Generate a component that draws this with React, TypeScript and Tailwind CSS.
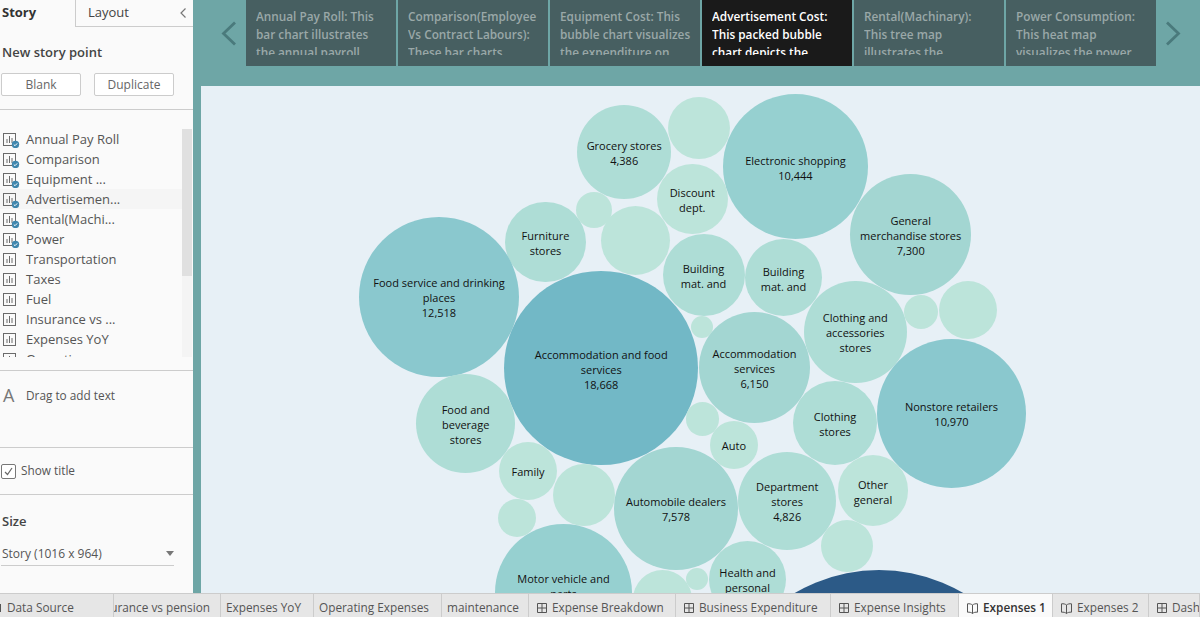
const FONT = "font-['Open_Sans','Noto_Sans',sans-serif]"

const points = [
  { title: "Annual Pay Roll", done: true },
  { title: "Comparison", done: true },
  { title: "Equipment ...", done: true },
  { title: "Advertisemen...", done: true, selected: true },
  { title: "Rental(Machi...", done: true },
  { title: "Power", done: true },
  { title: "Transportation" },
  { title: "Taxes" },
  { title: "Fuel" },
  { title: "Insurance vs ..." },
  { title: "Expenses YoY" },
  { title: "Operating ..." },
]

const cards = [
  { lines: ["Annual Pay Roll: This", "bar chart illustrates", "the annual payroll"] },
  { lines: ["Comparison(Employee", "Vs Contract Labours):", "These bar charts"] },
  { lines: ["Equipment Cost: This", "bubble chart visualizes", "the expenditure on"] },
  { lines: ["Advertisement Cost:", "This packed bubble", "chart depicts the"], active: true },
  { lines: ["Rental(Machinary):", "This tree map", "illustrates the"] },
  { lines: ["Power Consumption:", "This heat map", "visualizes the power"] },
]

const LIGHT = "#bce4da"
const PALE = "#aeddd6"
const MID = "#a3d6d2"
const TEAL = "#96d0d0"
const DEEP = "#8ac8ce"

// page coordinates, measured off the reference
const bubbles: { x: number; y: number; r: number; c: string; t?: string[] }[] = [
  { x: 624.2, y: 152, r: 47, c: PALE, t: ["Grocery stores", "4,386"] },
  { x: 699, y: 127.5, r: 31, c: LIGHT },
  { x: 795.5, y: 166.7, r: 72.8, c: TEAL, t: ["Electronic shopping", "10,444"] },
  { x: 692.3, y: 199, r: 35.3, c: LIGHT, t: ["Discount", "dept."] },
  { x: 910.7, y: 234.5, r: 60.8, c: MID, t: ["General", "merchandise stores", "7,300"] },
  { x: 545.5, y: 242, r: 40.2, c: PALE, t: ["Furniture", "stores"] },
  { x: 594, y: 210, r: 17.7, c: LIGHT },
  { x: 635.8, y: 240.5, r: 34.5, c: LIGHT },
  { x: 703.5, y: 274.5, r: 41, c: PALE, t: ["Building", "mat. and"] },
  { x: 783.5, y: 277.7, r: 38.6, c: PALE, t: ["Building", "mat. and"] },
  { x: 439, y: 297, r: 79.6, c: DEEP, t: ["Food service and drinking", "places", "12,518"] },
  { x: 702, y: 327, r: 11.3, c: LIGHT },
  { x: 601.2, y: 368, r: 97, c: "#72b8c6", t: ["Accommodation and food", "services", "18,668"] },
  { x: 754.5, y: 367.8, r: 55.5, c: MID, t: ["Accommodation", "services", "6,150"] },
  { x: 855.3, y: 332, r: 51.3, c: PALE, t: ["Clothing and", "accessories", "stores"] },
  { x: 921, y: 312, r: 17, c: LIGHT },
  { x: 968, y: 310, r: 29.3, c: LIGHT },
  { x: 951.5, y: 413.2, r: 74.5, c: DEEP, t: ["Nonstore retailers", "10,970"] },
  { x: 465.7, y: 423.7, r: 49.3, c: PALE, t: ["Food and", "beverage", "stores"] },
  { x: 702.8, y: 419, r: 16.6, c: LIGHT },
  { x: 734, y: 445, r: 24.2, c: LIGHT, t: ["Auto"] },
  { x: 835, y: 423, r: 41.9, c: PALE, t: ["Clothing", "stores"] },
  { x: 873, y: 490.7, r: 35.3, c: LIGHT, t: ["Other", "general"] },
  { x: 528, y: 471, r: 29.3, c: LIGHT, t: ["Family"] },
  { x: 584, y: 495, r: 31, c: LIGHT },
  { x: 676, y: 508.3, r: 61.7, c: MID, t: ["Automobile dealers", "7,578"] },
  { x: 787.2, y: 500.7, r: 49.2, c: PALE, t: ["Department", "stores", "4,826"] },
  { x: 517, y: 518, r: 18.7, c: LIGHT },
  { x: 563.5, y: 592.5, r: 68.5, c: TEAL, t: ["Motor vehicle and", "parts", "\u00a0"] },
  { x: 847, y: 546, r: 26, c: LIGHT },
  { x: 747.5, y: 579.2, r: 38.5, c: PALE, t: ["Health and", "personal"] },
  { x: 662, y: 599, r: 29.5, c: LIGHT },
  { x: 697, y: 579, r: 11.3, c: LIGHT },
  { x: 879, y: 736, r: 166, c: "#2c5a87" },
]

const tabs = [
  { label: "Data Source", w: 114, kind: "source" },
  { label: "Insurance vs pension", w: 107, kind: "sheet", cut: true },
  { label: "Expenses YoY", w: 93, kind: "sheet" },
  { label: "Operating Expenses", w: 128, kind: "sheet" },
  { label: "maintenance", w: 87, kind: "sheet" },
  { label: "Expense Breakdown", w: 147, kind: "dash" },
  { label: "Business Expenditure", w: 155, kind: "dash" },
  { label: "Expense Insights", w: 128, kind: "dash" },
  { label: "Expenses 1", w: 94, kind: "story", active: true },
  { label: "Expenses 2", w: 96, kind: "story" },
  { label: "Dashboard 1", w: 51, kind: "dash" },
]

function SheetIcon({ done }: { done?: boolean }) {
  return (
    <svg width="19" height="18" viewBox="0 0 19 18" className="shrink-0">
      <rect x="2.5" y="3.5" width="12" height="12" fill="none" stroke="#6b6b6b" />
      <path d="M6 13V9M8.5 13V6M11 13V8" stroke="#6b6b6b" fill="none" />
      {done && (
        <>
          <circle cx="14.5" cy="14.5" r="3.7" fill="#3f86ad" />
          <path d="M12.8 14.5l1.2 1.2 2.2-2.3" stroke="#fff" strokeWidth="1" fill="none" />
        </>
      )}
    </svg>
  )
}

function GridIcon() {
  return (
    <svg width="12" height="12" viewBox="0 0 12 12" className="shrink-0">
      <path d="M1.5 1.5h9v9h-9zM6 1.5v9M1.5 6h9" fill="none" stroke="#555" />
    </svg>
  )
}

function BookIcon() {
  return (
    <svg width="13" height="13" viewBox="0 0 13 13" className="shrink-0">
      <path d="M6.5 3C5.3 2 3.5 1.6 1.5 1.8v8.4c2-.2 3.8.2 5 1.3 1.2-1.1 3-1.5 5-1.3V1.8C9.5 1.6 7.7 2 6.5 3zM6.5 3v8.5" fill="none" stroke="#555" />
    </svg>
  )
}

function Sidebar() {
  return (
    <aside className="w-[193px] shrink-0 bg-[#fafafa] flex flex-col text-[#555] overflow-hidden">
      <div className="flex h-[27px] shrink-0">
        <div className="w-[75px] pl-[2px] pt-[3px] text-[13px] font-bold text-[#333]">Story</div>
        <div className="flex-1 flex items-center justify-between pl-[12px] pr-[6px] border-l border-b border-[#ccc] text-[13px] text-[#444]">
          <span>Layout</span>
          <svg width="8" height="12" viewBox="0 0 8 12">
            <path d="M6.5 1.5L2 6l4.5 4.5" fill="none" stroke="#777" strokeWidth="1.2" />
          </svg>
        </div>
      </div>
      <div className="h-[83px] shrink-0 border-b border-[#ccc] pl-[2px] pt-[16px]">
        <div className="text-[13px] leading-[18px] font-semibold text-[#444]">New story point</div>
        <div className="flex gap-[13px] mt-[12px] -ml-[1px]">
          <div className="w-[80px] h-[23px] bg-white border border-[#ccc] rounded-[2px] flex items-center justify-center text-[12px] text-[#666]">Blank</div>
          <div className="w-[80px] h-[23px] bg-white border border-[#ccc] rounded-[2px] flex items-center justify-center text-[12px] text-[#666]">Duplicate</div>
        </div>
      </div>
      <div className="h-[261px] shrink-0 border-b border-[#ccc] pt-[19px]">
        <div className="h-[228px] flex overflow-hidden">
          <div className="w-[182px]">
            {points.map((p) => (
              <div key={p.title} className={`h-[20px] flex items-center pl-[1px] text-[13px] ${p.selected ? "bg-[#f5f5f5]" : ""}`}>
                <SheetIcon done={p.done} />
                <span className="ml-[6px] pt-[2px]">{p.title}</span>
              </div>
            ))}
          </div>
          <div className="w-[10px] bg-[#f4f4f4]">
            <div className="h-[147px] bg-[#e0e0e0]" />
          </div>
        </div>
      </div>
      <div className="h-[77px] shrink-0 border-b border-[#ccc] flex items-start pt-[12px] pl-[3px]">
        <span className="text-[18px] leading-[24px] text-[#777] w-[23px]">A</span>
        <span className="text-[11.8px] leading-[24px]">Drag to add text</span>
      </div>
      <div className="h-[47px] shrink-0 border-b border-[#ccc] flex items-center pl-[1px]">
        <span className="w-[15px] h-[15px] border border-[#777] rounded-[2px] bg-white flex items-center justify-center">
          <svg width="11" height="11" viewBox="0 0 11 11">
            <path d="M2 6l2.5 2.5L9 2" fill="none" stroke="#666" strokeWidth="1.2" />
          </svg>
        </span>
        <span className="ml-[5px] text-[11.8px]">Show title</span>
      </div>
      <div className="flex-1 pl-[2px] pt-[17px]">
        <div className="text-[13px] leading-[18px] font-semibold text-[#444]">Size</div>
        <div className="mt-[12px] w-[173px] h-[24px] border-b border-[#ccc] flex items-center justify-between text-[12px] -ml-[1px] pl-[1px]">
          <span>Story (1016 x 964)</span>
          <svg width="8" height="5" viewBox="0 0 8 5">
            <path d="M0 0h8L4 5z" fill="#777" />
          </svg>
        </div>
      </div>
    </aside>
  )
}

function StoryNav() {
  return (
    <div className="h-[66px] shrink-0 flex">
      <div className="w-[53px] flex items-center pl-[27px]">
        <svg width="17" height="27" viewBox="0 0 17 27">
          <path d="M15 2.5L3.5 13.5 15 24.5" fill="none" stroke="#4a7a7c" strokeWidth="2.8" />
        </svg>
      </div>
      <div className="flex gap-[2px]">
        {cards.map((card) => (
          <div
            key={card.lines[0]}
            className={`w-[150px] pl-[10px] pt-[7px] text-[11.8px] leading-[18px] font-semibold ${card.active ? "bg-[#1a1a1a] text-white" : "bg-[#475f61] text-[#9aa8a8]"}`}
          >
            <div className="h-[48px] overflow-hidden whitespace-nowrap">
              {card.lines.map((line) => (
                <div key={line}>{line}</div>
              ))}
            </div>
          </div>
        ))}
      </div>
      <div className="flex-1 flex items-center pl-[9px]">
        <svg width="17" height="27" viewBox="0 0 17 27">
          <path d="M2 2.5l11.5 11L2 24.5" fill="none" stroke="#4a7a7c" strokeWidth="2.8" />
        </svg>
      </div>
    </div>
  )
}

function BubbleChart() {
  return (
    <div className="relative flex-1 ml-[8px] mt-[20px] bg-[#e7f0f6] overflow-hidden">
      {bubbles.map((b) => (
        <div
          key={`${b.x}-${b.y}`}
          className="absolute rounded-full flex flex-col items-center justify-center overflow-hidden pt-[2px] text-[11px] leading-[15px] text-[#111] whitespace-nowrap"
          style={{ left: b.x - b.r - 201, top: b.y - b.r - 86, width: b.r * 2, height: b.r * 2, background: b.c }}
        >
          {b.t?.map((line) => (
            <div key={line}>{line}</div>
          ))}
        </div>
      ))}
    </div>
  )
}

function TabBar() {
  return (
    <div className="h-[24px] shrink-0 flex bg-[#e6e6e6] border-t border-[#ccc] overflow-hidden text-[11.8px] text-[#555]">
      {tabs.map((tab) => (
        <div
          key={tab.label}
          className={`h-full shrink-0 flex items-center gap-[4px] border-r border-[#ccc] overflow-hidden whitespace-nowrap pt-[5px] ${tab.active ? "bg-[#fafafa] font-semibold text-[#333]" : ""} ${tab.cut ? "justify-end pr-[10px]" : tab.kind === "source" ? "" : tab.kind === "sheet" ? "pl-[5px]" : "pl-[7px]"}`}
          style={{ width: tab.w }}
        >
          {tab.kind === "source" && <span className="w-[1px] h-[8px] mr-[2px] bg-[#555] shrink-0" />}
          {tab.kind === "dash" && <GridIcon />}
          {tab.kind === "story" && <BookIcon />}
          <span className="shrink-0">{tab.label}</span>
        </div>
      ))}
    </div>
  )
}

export default function App() {
  return (
    <div className={`${FONT} w-[1200px] h-[617px] flex flex-col overflow-hidden`}>
      <div className="flex-1 flex min-h-0">
        <Sidebar />
        <main className="flex-1 flex flex-col bg-[#6ea6a6] min-w-0">
          <StoryNav />
          <BubbleChart />
        </main>
      </div>
      <TabBar />
    </div>
  )
}
